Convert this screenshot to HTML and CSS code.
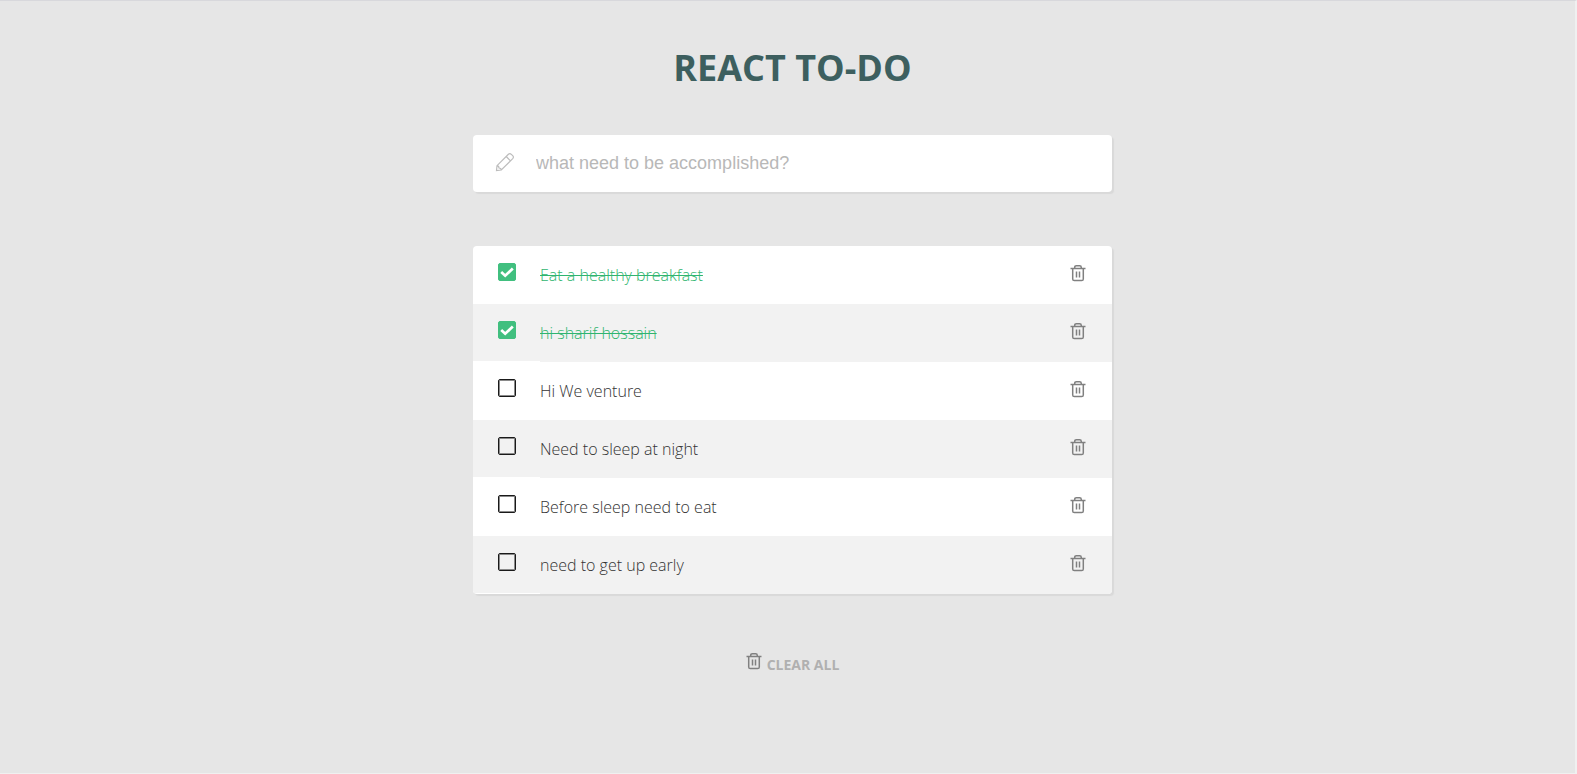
FILE: index.html
```html
<!DOCTYPE html>
<html lang="en">
<head>
<meta charset="utf-8">
<title>React To-Do</title>
<link rel="stylesheet" href="styles.css">
</head>
<body>
<svg class="sprite" aria-hidden="true">
  <symbol id="trash" viewBox="0 0 16 18">
    <path d="M.5 4.5h15M4.7 4.2V3.4q0-1.7 1.7-1.7h3.2q1.7 0 1.7 1.7v.8M2.7 4.7V15q0 1.6 1.6 1.6h7.4q1.6 0 1.6-1.6V4.7M6.5 7.5v6M9.5 7.5v6" fill="none" stroke="currentColor" stroke-width="1.5"/>
  </symbol>
  <symbol id="tick" viewBox="0 0 18 18">
    <path d="M3.2 9l4 3.7 7.6-7.2" fill="none" stroke="#fff" stroke-width="2.7"/>
  </symbol>
</svg>
<main class="app">
  <h1 class="title">REACT TO-DO</h1>
  <form class="entry card">
    <label class="entry-icon" for="new-task" aria-label="New task">
      <svg class="pencil" viewBox="0 0 20 20" aria-hidden="true">
        <path d="M1.500 18.500l.5-4.800L13.400 2.300q1.500-1.400 2.900 0l1.400 1.400q1.400 1.400 0 2.900L6.300 18zM2 13.700q1.800 0 2 2.300 2.200.1 2.300 2M11.200 4.500l4.300 4.300" fill="none" stroke="currentColor" stroke-width="1.200"/>
      </svg>
    </label>
    <input class="entry-input" id="new-task" type="text" placeholder="what need to be accomplished?">
  </form>
  <ul class="tasks card">
    <li class="task">
      <span class="check"><input class="box" type="checkbox" id="t1" checked><svg class="tick" aria-hidden="true"><use href="#tick"/></svg></span>
      <label class="name" for="t1">Eat a healthy breakfast</label>
      <button class="remove" type="button" aria-label="Delete"><svg class="trash"><use href="#trash"/></svg></button>
    </li>
    <li class="task">
      <span class="check"><input class="box" type="checkbox" id="t2" checked><svg class="tick" aria-hidden="true"><use href="#tick"/></svg></span>
      <label class="name" for="t2">hi sharif hossain</label>
      <button class="remove" type="button" aria-label="Delete"><svg class="trash"><use href="#trash"/></svg></button>
    </li>
    <li class="task">
      <span class="check"><input class="box" type="checkbox" id="t3"></span>
      <label class="name" for="t3">Hi We venture</label>
      <button class="remove" type="button" aria-label="Delete"><svg class="trash"><use href="#trash"/></svg></button>
    </li>
    <li class="task">
      <span class="check"><input class="box" type="checkbox" id="t4"></span>
      <label class="name" for="t4">Need to sleep at night</label>
      <button class="remove" type="button" aria-label="Delete"><svg class="trash"><use href="#trash"/></svg></button>
    </li>
    <li class="task">
      <span class="check"><input class="box" type="checkbox" id="t5"></span>
      <label class="name" for="t5">Before sleep need to eat</label>
      <button class="remove" type="button" aria-label="Delete"><svg class="trash"><use href="#trash"/></svg></button>
    </li>
    <li class="task">
      <span class="check"><input class="box" type="checkbox" id="t6"></span>
      <label class="name" for="t6">need to get up early</label>
      <button class="remove" type="button" aria-label="Delete"><svg class="trash"><use href="#trash"/></svg></button>
    </li>
  </ul>
  <button class="clear" type="button"><svg class="trash" aria-hidden="true"><use href="#trash"/></svg><span class="clear-text">CLEAR ALL</span></button>
</main>
</body>
</html>
```
FILE: styles.css
```css
* { box-sizing: border-box; }

body {
  margin: 0;
  min-height: 100vh;
  background: #e6e6e6;
  border: solid #f0f0f0;
  border-width: 1px 2px 1px 0;
  border-top-color: #d8d8dc;
  font-family: "Segoe UI", "Open Sans", "Noto Sans", sans-serif;
}

.sprite { display: none; }

.app {
  display: flex;
  flex-direction: column;
  align-items: center;
  padding: 42px 0 40px 10px;
}

.title {
  margin: 0 0 42px;
  color: #3d5f5f;
  font-size: 36px;
  line-height: 50px;
  font-weight: 700;
}

.card {
  width: 100%;
  max-width: 639px;
  background: #fff;
  border-radius: 4px;
  box-shadow: 2px 2px 1px #d9d9d9;
}

.entry {
  display: flex;
  align-items: center;
  height: 57px;
}

.entry-icon {
  display: flex;
  width: 63px;
  padding: 0 0 3px 22px;
  color: #bcbcbc;
}

.pencil { width: 20px; height: 20px; }

.entry-input {
  flex: 1;
  min-width: 0;
  padding: 0;
  border: 0;
  outline: 0;
  background: none;
  font: 18px "Liberation Sans", Arial, sans-serif;
}

.entry-input::placeholder { color: #b8b8b8; opacity: 1; }

.tasks {
  margin: 54px 0;
  padding: 0;
  list-style: none;
  overflow: hidden;
}

.task {
  display: grid;
  grid-template-columns: 67px 1fr 52px;
  height: 58px;
  color: #333;
}

.check {
  display: grid;
  align-content: start;
  height: 57px;
  padding: 17px 0 0 25px;
}

.task:nth-child(even) > * { background-color: #f2f2f2; }

.box, .tick { grid-area: 1 / 1; width: 18px; height: 18px; }

.box {
  margin: 0;
  appearance: none;
  border: 1px solid #1a1a1a;
  border-radius: 2px;
  box-shadow: inset 0 0 0 1px #8a8a8a;
}

.box:checked { border-color: #41bf7f; background: #41bf7f; box-shadow: none; }

.tick { pointer-events: none; }

.name {
  padding-top: 17px;
  font-size: 16px;
  line-height: 24px;
  font-weight: 300;
}

.task:has(:checked) .name { color: #2fb56f; text-decoration: line-through; }

.remove, .clear {
  border: 0;
  background: none;
  color: #808080;
  cursor: pointer;
}

.remove {
  display: flex;
  align-items: flex-start;
  padding: 18px 0 0 10px;
}

.trash { width: 16px; height: 18px; }

.clear {
  display: flex;
  gap: 5px;
  padding: 4px 0;
  font: 700 14px/26px "Segoe UI", "Open Sans", "Noto Sans", sans-serif;
}

.clear-text { color: #b0b0b0; }
```
